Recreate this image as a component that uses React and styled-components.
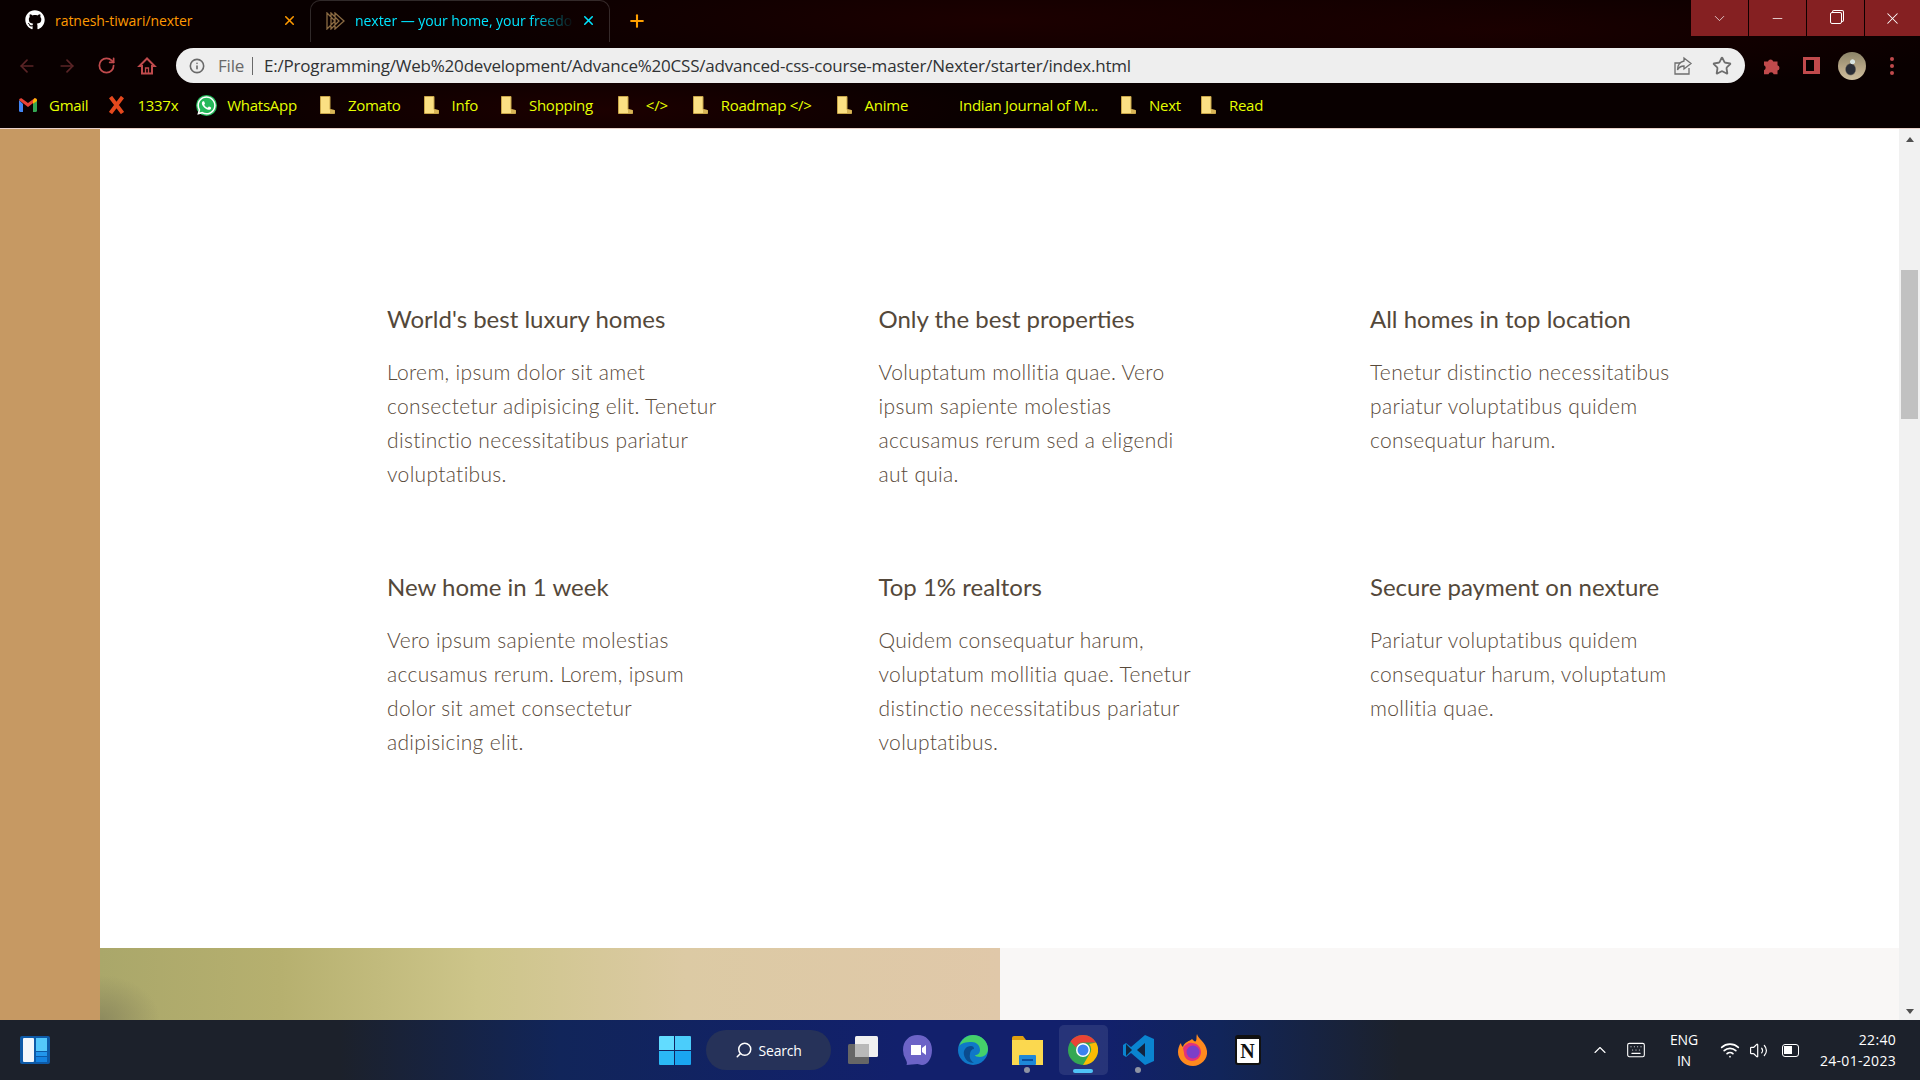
import React from 'react';
import styled, { createGlobalStyle } from 'styled-components';
import { FaGithub, FaWhatsapp } from 'react-icons/fa';
import { ArrowLeft, ArrowRight, RotateCw, Info, Star, X, Plus, ChevronDown, ChevronUp, Minus, Search, Wifi, Volume2, Keyboard } from 'lucide-react';

const GlobalStyle = createGlobalStyle`
    html, body {
        margin: 0;
        height: 100%;
        overflow: hidden;
    }
    * {
        box-sizing: border-box;
    }
`;

const Screen = styled.div`
    height: 100vh;
    display: flex;
    flex-direction: column;
    font-family: 'Open Sans', 'Liberation Sans', sans-serif;
`;

const BrowserChrome = styled.header`
    height: 129px;
    flex: none;
    display: flex;
    flex-direction: column;
    border-bottom: 1px solid #e8d0c8;
    background:
        radial-gradient(ellipse 600px 70px at 1000px 20px, #1c0000, transparent),
        radial-gradient(ellipse 500px 60px at 1500px 30px, #1a0000, transparent),
        radial-gradient(ellipse 400px 50px at 600px 110px, #1c0000, transparent),
        #090000;
`;

const TabRow = styled.div`
    height: 41px;
    flex: none;
    display: flex;
    align-items: stretch;
`;

const Tab = styled.div`
    width: ${p => p.$width}px;
    height: 42px;
    display: flex;
    align-items: center;
    font-size: 14px;
    letter-spacing: -0.05px;
    color: ${p => p.$color};
    border: ${p => (p.$active ? '1px solid rgba(255,255,255,0.16)' : 'none')};
    border-bottom: none;
    border-radius: 10px 10px 0 0;
    padding: 0 0 2px ${p => p.$pad}px;
    white-space: nowrap;
`;

const TabTitle = styled.span`
    width: ${p => p.$width}px;
    margin-left: ${p => p.$gap}px;
    ${p => p.$fade && 'mask-image: linear-gradient(90deg, #000 78%, transparent 97%);'}
`;

const NewTab = styled.div`
    margin-left: 17px;
    display: flex;
    align-items: center;
    color: #ffa000;
`;

const WindowButtons = styled.div`
    margin-left: auto;
    height: 36px;
    display: flex;
    gap: 1px;
`;

const WindowButton = styled.div`
    width: ${p => p.$width || 57}px;
    background: #852022;
    color: #fff;
    display: flex;
    align-items: center;
    justify-content: center;
`;

const RestoreIcon = styled.div`
    width: 12px;
    height: 12px;
    border: 1.2px solid #fff;
    border-radius: 2px;
    box-shadow: 2px -2px 0 -1px #852022, 2px -2px 0 0 #fff;
`;

const Toolbar = styled.div`
    height: 43px;
    flex: none;
    padding: 7px 0 1px 17px;
    display: flex;
    align-items: center;
`;

const NavButton = styled.div`
    width: ${p => p.$width || 40}px;
    display: flex;
    align-items: center;
    color: ${p => p.$color || '#c04a4c'};
`;

const AddressBar = styled.div`
    width: 1569px;
    height: 35px;
    margin-left: -3px;
    flex: none;
    background: #eeeeee;
    border-radius: 18px;
    display: flex;
    align-items: center;
    padding-left: 13px;
    font-size: 17px;
    letter-spacing: -0.21px;
    color: #303234;
    white-space: nowrap;
`;

const FileLabel = styled.span`
    margin-left: 13px;
    color: #696969;
    padding-right: 8px;
    border-right: 1px solid #696969;
    line-height: 18px;
`;

const Url = styled.span`
    margin-left: 11px;
`;

const BarIcons = styled.div`
    margin-left: auto;
    padding-right: 13px;
    display: flex;
    align-items: center;
    gap: 19px;
    color: #6e6e6e;
`;

const ToolIcons = styled.div`
    margin-left: 17px;
    display: flex;
    align-items: center;
    color: #c04a4c;
`;

const SidePanel = styled.div`
    width: 17px;
    height: 17px;
    margin-left: 21px;
    border: 3px solid #c04a4c;
    border-right-width: 6px;
    background: #050000;
`;

const Avatar = styled.div`
    width: 28px;
    height: 28px;
    margin-left: 18px;
    border-radius: 50%;
    background:
        radial-gradient(circle at 52% 35%, #d8e4e0 0 9%, transparent 12%),
        radial-gradient(ellipse at 45% 62%, #2b2f38 0 20%, transparent 26%),
        linear-gradient(#8b8468, #b9a888 60%, #cdbf9f);
`;

const MenuDots = styled.div`
    margin-left: 24px;
    display: flex;
    flex-direction: column;
    gap: 3px;
`;

const Dot = styled.span`
    width: 4px;
    height: 4px;
    border-radius: 50%;
    background: #c04a4c;
`;

const BookmarkRow = styled.nav`
    height: 44px;
    flex: none;
    padding: 0 0 2px 19px;
    display: flex;
    align-items: center;
    gap: 23px;
`;

const Bookmark = styled.div`
    display: flex;
    align-items: center;
    gap: ${p => p.$gap || 13}px;
    margin-right: ${p => p.$after || 0}px;
    font-size: 15px;
    letter-spacing: -0.26px;
    color: #e6ff00;
    white-space: nowrap;
`;

const WhatsappBadge = styled.span`
    width: 21px;
    height: 21px;
    border-radius: 50%;
    background: #25b85a;
    display: flex;
    color: #fff;
`;

const PageArea = styled.div`
    flex: 1;
    min-height: 0;
    display: flex;
`;

const Sidebar = styled.aside`
    width: 100px;
    flex: none;
    background: #c69963;
`;

const Main = styled.main`
    flex: 1;
    min-width: 0;
    display: flex;
    flex-direction: column;
    background: #fff;
`;

const Features = styled.section`
    flex: 1;
    padding: 175px 0 0 287px;
    display: grid;
    grid-template-columns: repeat(3, 491.5px);
    grid-auto-rows: 188px;
    row-gap: 80px;
`;

const Feature = styled.article`
    font-family: 'Lato', 'Open Sans', sans-serif;
`;

const FeatureTitle = styled.h4`
    margin: 0 0 22px;
    font-size: 24px;
    line-height: 30px;
    font-weight: 400;
    color: #54483a;
    white-space: nowrap;
`;

const FeatureText = styled.p`
    margin: -1px 0 0;
    font-size: 21px;
    line-height: 34px;
    font-weight: 300;
    letter-spacing: 0.32px;
    color: #594a3a;
    white-space: nowrap;
`;

const GalleryRow = styled.section`
    height: 72px;
    flex: none;
    display: flex;
    background: #f9f7f6;
`;

const GalleryImage = styled.div`
    width: 900px;
    background:
        radial-gradient(ellipse 60px 45px at 0 100%, #8d8a5e, transparent),
        linear-gradient(90deg, #aaa76a, #b6b06f 20%, #cdc58a 42%, #dccaa4 65%, #e0c8a9);
`;

const Scrollbar = styled.div`
    width: 21px;
    flex: none;
    background: #f1f1f1;
    display: flex;
    flex-direction: column;
    align-items: center;
    justify-content: space-between;
    padding: 8px 0 6px;
    position: relative;
`;

const Arrow = styled.span`
    width: 0;
    height: 0;
    border-left: 4.5px solid transparent;
    border-right: 4.5px solid transparent;
    border-${p => (p.$down ? 'top' : 'bottom')}: 5px solid #505050;
`;

const ScrollThumb = styled.div`
    position: absolute;
    top: 141px;
    left: 2px;
    width: 17px;
    height: 149px;
    background: #c1c1c1;
`;

const Taskbar = styled.footer`
    height: 60px;
    flex: none;
    display: grid;
    grid-template-columns: 1fr auto 1fr;
    align-items: center;
    color: #fff;
    background: linear-gradient(90deg, #1c212b 0, #1c212b 340px, #11255a 560px, #12206c 900px, #12206c 1100px, #11255a 1220px, #1c212b 1400px);
`;

const TaskLeft = styled.div`
    padding-left: 20px;
    display: flex;
    align-items: center;
`;

const TaskCenter = styled.div`
    display: flex;
    align-items: center;
`;

const TaskRight = styled.div`
    padding-right: 24px;
    display: flex;
    align-items: center;
    justify-content: flex-end;
`;

const SearchPill = styled.div`
    width: 125px;
    height: 40px;
    margin: 0 17px 0 15px;
    border-radius: 20px;
    background: #263259;
    display: flex;
    align-items: center;
    gap: 6px;
    padding-left: 29px;
    font-size: 14px;
    letter-spacing: -0.2px;
`;

const SearchGlyph = styled(Search)`
    transform: scaleX(-1);
`;

const TaskSlot = styled.div`
    position: relative;
    width: ${p => p.$width}px;
    margin-right: ${p => p.$right || 0}px;
    height: 50px;
    display: flex;
    align-items: center;
    justify-content: center;
    border-radius: 5px;
    background: ${p => (p.$active ? 'rgba(255,255,255,0.09)' : 'transparent')};
`;

const TaskIndicator = styled.span`
    position: absolute;
    bottom: 2px;
    left: 50%;
    transform: translateX(-50%);
    width: ${p => (p.$active ? 20 : 6)}px;
    height: ${p => (p.$active ? 4 : 6)}px;
    border-radius: 3px;
    background: ${p => (p.$active ? '#4fc3f7' : '#8e93a3')};
`;

const NotionBox = styled.div`
    width: 26px;
    height: 30px;
    background: #fff;
    border: 2px solid #111;
    border-top-width: 4px;
    border-radius: 3px;
    color: #111;
    font-family: 'Liberation Serif', serif;
    font-weight: 700;
    font-size: 20px;
    line-height: 24px;
    text-align: center;
`;

const TrayIcon = styled.div`
    display: flex;
    margin-right: ${p => p.$right}px;
`;

const LangBlock = styled.div`
    width: 40px;
    margin-right: 16px;
    text-align: center;
    font-size: 14px;
    line-height: 21px;
    letter-spacing: -0.2px;
`;

const ClockBlock = styled.div`
    text-align: right;
    font-size: 14px;
    line-height: 21px;
    letter-spacing: 0.3px;
`;

const BatteryIcon = styled.div`
    width: 17px;
    height: 13px;
    border: 1.5px solid #fff;
    border-radius: 3px;
    margin-right: 21px;
    padding: 1.5px;
    &::before {
        content: '';
        display: block;
        width: 8px;
        height: 100%;
        background: #fff;
    }
`;

const bookmarks = [
    { name: 'Zomato' },
    { name: 'Info' },
    { name: 'Shopping', after: 2 },
    { name: '</>', after: 2 },
    { name: 'Roadmap </>', after: 2 },
    { name: 'Anime', after: -1 },
];

const features = [
    { title: "World's best luxury homes", lines: ['Lorem, ipsum dolor sit amet', 'consectetur adipisicing elit. Tenetur', 'distinctio necessitatibus pariatur', 'voluptatibus.'] },
    { title: 'Only the best properties', lines: ['Voluptatum mollitia quae. Vero', 'ipsum sapiente molestias', 'accusamus rerum sed a eligendi', 'aut quia.'] },
    { title: 'All homes in top location', lines: ['Tenetur distinctio necessitatibus', 'pariatur voluptatibus quidem', 'consequatur harum.'] },
    { title: 'New home in 1 week', lines: ['Vero ipsum sapiente molestias', 'accusamus rerum. Lorem, ipsum', 'dolor sit amet consectetur', 'adipisicing elit.'] },
    { title: 'Top 1% realtors', lines: ['Quidem consequatur harum,', 'voluptatum mollitia quae. Tenetur', 'distinctio necessitatibus pariatur', 'voluptatibus.'] },
    { title: 'Secure payment on nexture', lines: ['Pariatur voluptatibus quidem', 'consequatur harum, voluptatum', 'mollitia quae.'] },
];

function FolderIcon() {
    return (
        <svg width="15" height="18" viewBox="0 0 15 18">
            <path d="M.5.5h9.5v13l4.5 1v3H.5z" fill="#fbe083" stroke="#c8a548" />
            <path d="M10 13.5v3.5h4.5v-3z" fill="#d8b557" />
        </svg>
    );
}

function GmailIcon() {
    return (
        <svg width="18" height="14" viewBox="0 0 18 14">
            <path d="M0 2v10.5q0 1.5 1.5 1.5H4V6z" fill="#4285f4" />
            <path d="M18 2v10.5q0 1.5-1.5 1.5H14V6z" fill="#34a853" />
            <path d="M0 2l9 7 9-7q-.3-2-2.5-1.8L9 5 2.5.2Q.3 0 0 2z" fill="#ea4335" />
            <path d="M14 2.8V6l4-3V2q-.3-2-2.5-1.8z" fill="#fbbc04" />
        </svg>
    );
}

function XLogo() {
    return (
        <svg width="15" height="18" viewBox="0 0 15 18">
            <path d="M1.5 1l12 16M13.5 1l-12 16" stroke="#e5481d" strokeWidth="4" />
        </svg>
    );
}

function PlayLogo() {
    return (
        <svg width="20" height="18" viewBox="0 0 20 18" fill="none" stroke="#8a6a42" strokeWidth="1.3">
            <path d="M1 1l8 8-8 8zM5 1l8 8-8 8zM9 1l9 8-9 8z" />
        </svg>
    );
}

function HomeGlyph() {
    return (
        <svg width="20" height="20" viewBox="0 0 20 20" fill="none" stroke="currentColor" strokeWidth="2">
            <path d="M10 2.500L2.500 10H5v7.500h10V10h2.500z" />
            <path d="M8.500 17.500V12h3v5.500" strokeWidth="1.300" />
        </svg>
    );
}

function PuzzleGlyph() {
    return (
        <svg width="20" height="20" viewBox="0 0 20 20" fill="currentColor">
            <path d="M2 5.500h4a2.700 2.700 0 0 1 5.200 0h4.300v3.800a2.700 2.700 0 0 1 0 5.200v3.800h-3.800a2.700 2.700 0 0 0-5.200 0H2v-4a2.700 2.700 0 0 0 0-5z" />
        </svg>
    );
}

function WindowsLogo() {
    return (
        <svg width="32" height="29" viewBox="0 0 32 29">
            <path d="M0 1q0-1 1-1h14v14H0z" fill="#62dcff" />
            <path d="M16 0h15q1 0 1 1v13H16z" fill="#4bcdfb" />
            <path d="M0 15h15v14H1q-1 0-1-1z" fill="#2bb9f6" />
            <path d="M16 15h16v13q0 1-1 1H16z" fill="#1aa5f0" />
        </svg>
    );
}

function WidgetsLogo() {
    return (
        <svg width="30" height="28" viewBox="0 0 30 28">
            <rect width="30" height="28" rx="2" fill="#0d5aa8" />
            <rect x="3" y="2" width="11" height="24" rx="1" fill="#f2f7fb" />
            <rect x="16" y="2" width="11" height="13" fill="#54c8fb" />
            <rect x="16" y="16" width="11" height="4" fill="#2296ec" />
            <rect x="16" y="21" width="11" height="5" fill="#1583e0" />
        </svg>
    );
}

function TaskViewLogo() {
    return (
        <svg width="30" height="28" viewBox="0 0 30 28">
            <rect x="0" y="8" width="21" height="20" rx="1.5" fill="#666" />
            <rect x="7" y="0" width="23" height="21" rx="1.5" fill="#f0f0f0" />
            <rect x="7" y="8" width="14" height="13" fill="#b9b9b9" />
        </svg>
    );
}

function TeamsLogo() {
    return (
        <svg width="29" height="30" viewBox="0 0 29 30">
            <path d="M14.500 0C23 0 29 6 29 15s-5 15-10 15c-2 0-3-1-4.500-1-3 0-8 1-11 1 1-2 0-4-1-6Q0 20 0 15C0 6 6 0 14.500 0z" fill="#6c63c7" />
            <path d="M8 10h10v10H8zM19 13l4-3v10l-4-3z" fill="#fff" />
        </svg>
    );
}

function EdgeLogo() {
    return (
        <svg width="30" height="30" viewBox="0 0 30 30">
            <circle cx="15" cy="15" r="15" fill="#0f78c8" />
            <path d="M1 12C3 4 9 0 15 0c8 0 15 6 15 14 0 5-4 8-8 8-3 0-5-1-5-2 3 0 5-2 5-5 0-5-4-8-8-8-6 0-12 1-13 5z" fill="#45d06a" />
            <path d="M13 11c-5 0-8 4-7 9 1 5 5 8 10 8-3-2-5-5-4-9 0-3 2-5 4-5 0-2-1-3-3-3z" fill="#0b4c8f" />
        </svg>
    );
}

function ExplorerLogo() {
    return (
        <svg width="31" height="30" viewBox="0 0 31 30">
            <path d="M0 3q0-2 2-2h9l3 4H0z" fill="#e0a010" />
            <path d="M0 5h31v25H0z" fill="#fbd84f" />
            <rect x="7" y="20" width="17" height="10" rx="1" fill="#1e88d8" />
            <rect x="10" y="24" width="11" height="2" fill="#0b4f9e" />
        </svg>
    );
}

function ChromeLogo() {
    return (
        <svg width="30" height="30" viewBox="0 0 30 30">
            <circle cx="15" cy="15" r="15" fill="#34a853" />
            <path d="M15 0a15 15 0 0 1 13 7.500H15a7.500 7.500 0 0 0-7 5L2.500 6.500A15 15 0 0 1 15 0z" fill="#ea4335" />
            <path d="M28 7.500A15 15 0 0 1 15 30l6.500-11A7.500 7.500 0 0 0 21 9z" fill="#fbbc04" />
            <circle cx="15" cy="15" r="7" fill="#fff" />
            <circle cx="15" cy="15" r="5.500" fill="#3b82f0" />
        </svg>
    );
}

function VsCodeLogo() {
    return (
        <svg width="31" height="30" viewBox="0 0 31 30">
            <path d="M22 0l9 4v22l-9 4-14-12-5 4-3-2v-10l3-2 5 4z" fill="#0a84d0" />
            <path d="M22 8l-8 7 8 7z" fill="#12243f" />
            <path d="M3 9l6 6-6 6z" fill="#12243f" />
        </svg>
    );
}

function FirefoxLogo() {
    return (
        <svg width="30" height="32" viewBox="0 0 30 32">
            <path d="M19 0c1 5 9 8 10 17 1 8-6 15-14 15S0 26 0 18c0-3 1-7 3-9 0 2 1 3 2 4 1-5 7-6 9-8 2 2 3 3 4 2 1-2 0-5 1-7z" fill="#ff8a1e" />
            <path d="M5 14c2-4 7-6 9-5 5 0 9 4 9 9 0 5-4 9-9 9s-8-4-8-8z" fill="#e3327a" />
            <circle cx="15" cy="18" r="6.500" fill="#7b3fc8" />
        </svg>
    );
}

export default function App() {
    return (
        <Screen>
            <GlobalStyle />
            <BrowserChrome>
                <TabRow>
                    <Tab $width={310} $pad={25} $color="#ff9a00">
                        <FaGithub size={20} color="#fff" />
                        <TabTitle $width={227} $gap={10}>ratnesh-tiwari/nexter</TabTitle>
                        <X size={15} strokeWidth={2.5} />
                    </Tab>
                    <Tab $width={300} $pad={15} $color="#00e5ff" $active>
                        <PlayLogo />
                        <TabTitle $width={226} $gap={9} $fade>nexter — your home, your freedo</TabTitle>
                        <X size={15} strokeWidth={2.5} />
                    </Tab>
                    <NewTab><Plus size={20} strokeWidth={2.5} /></NewTab>
                    <WindowButtons>
                        <WindowButton><ChevronDown size={17} strokeWidth={1} /></WindowButton>
                        <WindowButton><Minus size={15} strokeWidth={1.2} /></WindowButton>
                        <WindowButton><RestoreIcon /></WindowButton>
                        <WindowButton $width={55}><X size={19} strokeWidth={1.3} /></WindowButton>
                    </WindowButtons>
                </TabRow>
                <Toolbar>
                    <NavButton $color="#5b2426"><ArrowLeft size={20} /></NavButton>
                    <NavButton $color="#5b2426"><ArrowRight size={20} /></NavButton>
                    <NavButton><RotateCw size={19} strokeWidth={2.2} /></NavButton>
                    <NavButton $width={42}><HomeGlyph /></NavButton>
                    <AddressBar>
                        <Info size={16} color="#696969" strokeWidth={2.4} />
                        <FileLabel>File</FileLabel>
                        <Url>E:/Programming/Web%20development/Advance%20CSS/advanced-css-course-master/Nexter/starter/index.html</Url>
                        <BarIcons>
                            <svg width="20" height="20" viewBox="0 0 20 20" fill="none" stroke="#6e6e6e" strokeWidth="1.3">
                                <path d="M16 12v6H2V7h5" />
                                <path d="M11 2l7 5.500-7 5.500v-3c-3 0-5 1-6.500 4 0-5 2-8 6.500-9z" />
                            </svg>
                            <Star size={20} strokeWidth={2.2} />
                        </BarIcons>
                    </AddressBar>
                    <ToolIcons>
                        <PuzzleGlyph />
                        <SidePanel />
                        <Avatar />
                        <MenuDots><Dot /><Dot /><Dot /></MenuDots>
                    </ToolIcons>
                </Toolbar>
                <BookmarkRow>
                    <Bookmark $gap={12} $after={-2}><GmailIcon />Gmail</Bookmark>
                    <Bookmark $after={-5}><XLogo />1337x</Bookmark>
                    <Bookmark $gap={10}><WhatsappBadge><FaWhatsapp size={21} /></WhatsappBadge>WhatsApp</Bookmark>
                    {bookmarks.map(b => (
                        <Bookmark key={b.name} $after={b.after}><FolderIcon />{b.name}</Bookmark>
                    ))}
                    <Bookmark $gap={11}><svg width="18" height="18" />Indian Journal of M...</Bookmark>
                    <Bookmark $after={-3}><FolderIcon />Next</Bookmark>
                    <Bookmark><FolderIcon />Read</Bookmark>
                </BookmarkRow>
            </BrowserChrome>
            <PageArea>
                <Sidebar />
                <Main>
                    <Features>
                        {features.map(f => (
                            <Feature key={f.title}>
                                <FeatureTitle>{f.title}</FeatureTitle>
                                <FeatureText>
                                    {f.lines.map(line => <React.Fragment key={line}>{line}<br /></React.Fragment>)}
                                </FeatureText>
                            </Feature>
                        ))}
                    </Features>
                    <GalleryRow><GalleryImage /></GalleryRow>
                </Main>
                <Scrollbar>
                    <Arrow />
                    <ScrollThumb />
                    <Arrow $down />
                </Scrollbar>
            </PageArea>
            <Taskbar>
                <TaskLeft><WidgetsLogo /></TaskLeft>
                <TaskCenter>
                    <WindowsLogo />
                    <SearchPill><SearchGlyph size={18} />Search</SearchPill>
                    <TaskSlot $width={30} $right={25}><TaskViewLogo /></TaskSlot>
                    <TaskSlot $width={29} $right={26}><TeamsLogo /></TaskSlot>
                    <TaskSlot $width={30} $right={24}><EdgeLogo /></TaskSlot>
                    <TaskSlot $width={31} $right={16}><ExplorerLogo /><TaskIndicator /></TaskSlot>
                    <TaskSlot $width={49} $right={15} $active><ChromeLogo /><TaskIndicator $active /></TaskSlot>
                    <TaskSlot $width={31} $right={24}><VsCodeLogo /><TaskIndicator /></TaskSlot>
                    <TaskSlot $width={30} $right={26}><FirefoxLogo /></TaskSlot>
                    <TaskSlot $width={28}><NotionBox>N</NotionBox></TaskSlot>
                </TaskCenter>
                <TaskRight>
                    <TrayIcon $right={16}><ChevronUp size={20} strokeWidth={1.3} /></TrayIcon>
                    <TrayIcon $right={18}><Keyboard size={20} strokeWidth={1.3} /></TrayIcon>
                    <LangBlock>ENG<br />IN</LangBlock>
                    <TrayIcon $right={9}><Wifi size={20} strokeWidth={2} /></TrayIcon>
                    <TrayIcon $right={14}><Volume2 size={19} strokeWidth={1.5} /></TrayIcon>
                    <BatteryIcon />
                    <ClockBlock>22:40<br />24-01-2023</ClockBlock>
                </TaskRight>
            </Taskbar>
        </Screen>
    );
}
